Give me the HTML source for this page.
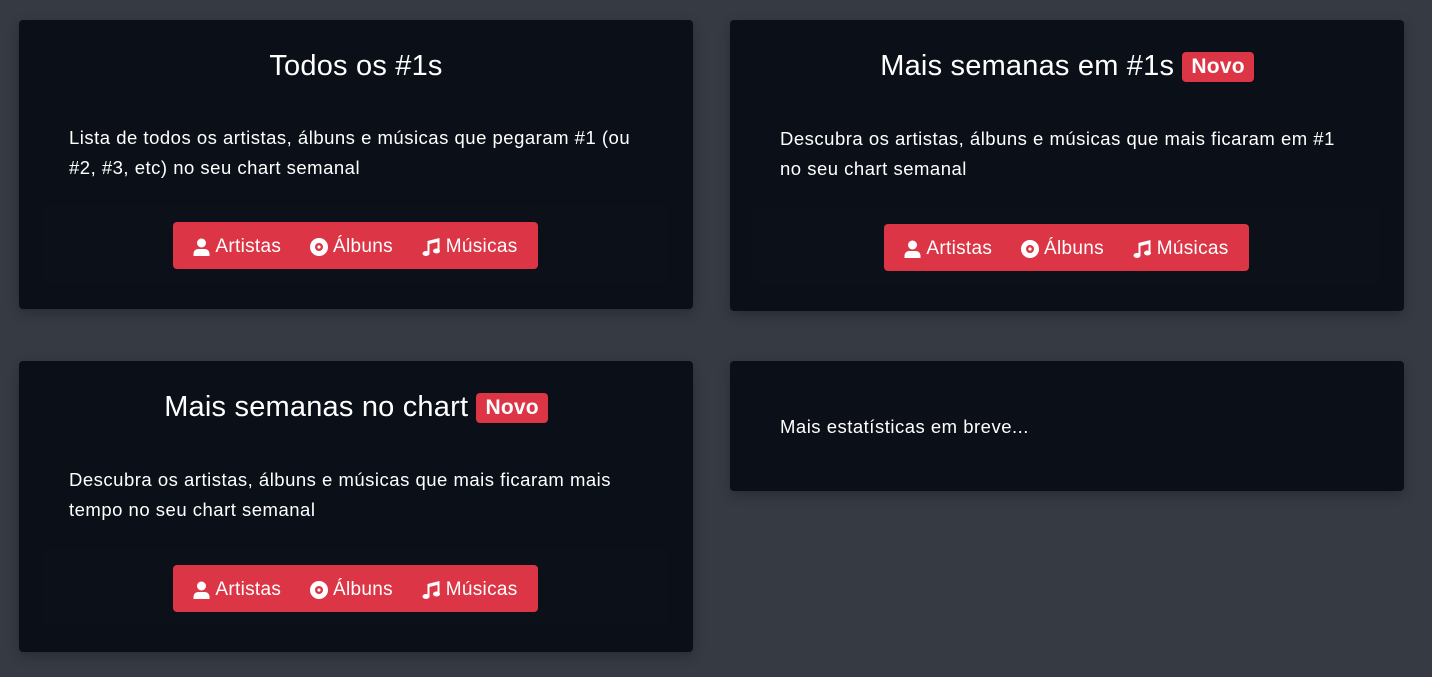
<html><head><style>
body{margin:0;background:#363a43;font-family:"Liberation Sans",sans-serif;color:#fff;width:1432px;height:677px;position:relative;overflow:hidden}
.c{position:absolute;background:#0b1018;border-radius:4px;box-shadow:0 4px 12px rgba(0,0,0,.25)}
.t{position:absolute;left:0;right:0;text-align:center;font-size:29px;letter-spacing:.2px}
.n{display:inline-block;background:#dc3545;border-radius:4px;font-weight:bold;font-size:21px;padding:3px 9px;vertical-align:2px;line-height:24px}
.p{position:absolute;left:50px;width:570px;font-size:18.5px;letter-spacing:.5px;line-height:30px}
.box{position:absolute;left:23px;right:25px;height:78px;background:#0c1119}
.b{position:absolute;left:154px;width:365px;height:47px;background:#dc3545;border-radius:4px;display:flex;align-items:center;justify-content:space-around;font-size:19px;padding:3px 6px 0;box-sizing:border-box;letter-spacing:.3px}
.b span{display:flex;align-items:center;gap:5px}
</style></head><body>
<svg width="0" height="0" style="position:absolute"><defs>
<symbol id="u" viewBox="0 0 16 18"><circle cx="8" cy="5" r="4.5" fill="#fff"/><path d="M0 18v-2c0-3 2-5 5-5h6c3 0 5 2 5 5v2z" fill="#fff"/></symbol>
<symbol id="d" viewBox="0 0 18 18"><circle cx="9" cy="9" r="9" fill="#fff"/><circle cx="9" cy="9" r="4" fill="#dc3545"/><circle cx="9" cy="9" r="1.6" fill="#fff"/></symbol>
<symbol id="m" viewBox="0 0 18 18"><path d="M5 3l12-3v13h-2V4L7 6v10H5z" fill="#fff"/><ellipse cx="3.5" cy="15.5" rx="3.5" ry="2.5" fill="#fff"/><ellipse cx="14" cy="13" rx="3.5" ry="2.5" fill="#fff"/></symbol>
</defs></svg>

<div class="c" style="left:19px;top:20px;width:674px;height:289px">
<div class="t" style="top:30px">Todos os #1s</div>
<div class="p" style="top:103px">Lista de todos os artistas, álbuns e músicas que pegaram #1 (ou #2, #3, etc) no seu chart semanal</div>
<div class="box" style="top:185px"></div>
<div class="b" style="top:202px"><span><svg width="17" height="18"><use href="#u"/></svg>Artistas</span><span><svg width="18" height="18"><use href="#d"/></svg>Álbuns</span><span><svg width="19" height="18"><use href="#m"/></svg>Músicas</span></div>
</div>

<div class="c" style="left:730px;top:20px;width:674px;height:291px">
<div class="t" style="top:30px">Mais semanas em #1s <span class="n">Novo</span></div>
<div class="p" style="top:104px">Descubra os artistas, álbuns e músicas que mais ficaram em #1 no seu chart semanal</div>
<div class="box" style="top:187px"></div>
<div class="b" style="top:204px"><span><svg width="17" height="18"><use href="#u"/></svg>Artistas</span><span><svg width="18" height="18"><use href="#d"/></svg>Álbuns</span><span><svg width="19" height="18"><use href="#m"/></svg>Músicas</span></div>
</div>

<div class="c" style="left:19px;top:361px;width:674px;height:291px">
<div class="t" style="top:30px">Mais semanas no chart <span class="n">Novo</span></div>
<div class="p" style="top:104px">Descubra os artistas, álbuns e músicas que mais ficaram mais tempo no seu chart semanal</div>
<div class="box" style="top:187px"></div>
<div class="b" style="top:204px"><span><svg width="17" height="18"><use href="#u"/></svg>Artistas</span><span><svg width="18" height="18"><use href="#d"/></svg>Álbuns</span><span><svg width="19" height="18"><use href="#m"/></svg>Músicas</span></div>
</div>

<div class="c" style="left:730px;top:361px;width:674px;height:130px">
<div class="p" style="top:51px">Mais estatísticas em breve...</div>
</div>
</body></html>
